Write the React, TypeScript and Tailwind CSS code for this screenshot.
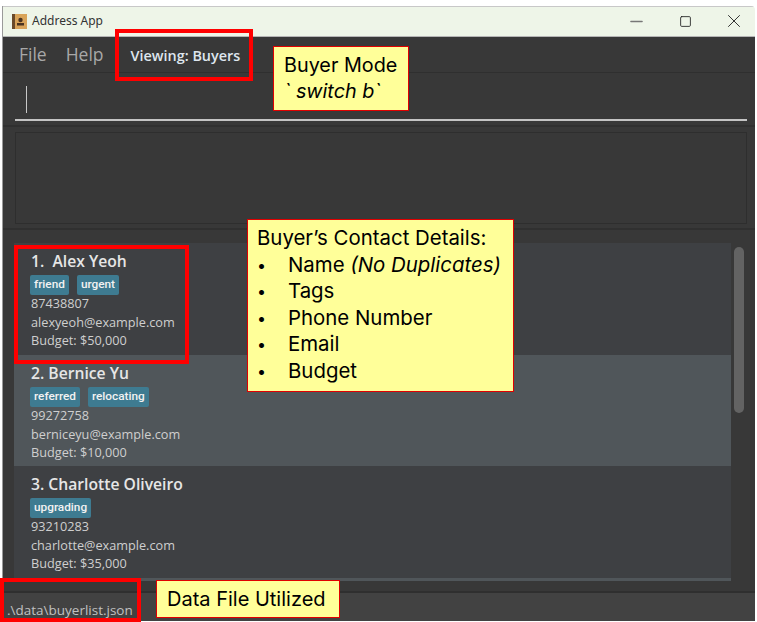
import { Minus, Square, X } from 'lucide-react';

const appFont = "font-['Open_Sans','Noto_Sans',sans-serif]";

const buyers = [
  { name: '1.  Alex Yeoh', tags: ['friend', 'urgent'], phone: '87438807', email: 'alexyeoh@example.com', budget: 'Budget: $50,000', alt: false },
  { name: '2. Bernice Yu', tags: ['referred', 'relocating'], phone: '99272758', email: 'berniceyu@example.com', budget: 'Budget: $10,000', alt: true },
  { name: '3. Charlotte Oliveiro', tags: ['upgrading'], phone: '93210283', email: 'charlotte@example.com', budget: 'Budget: $35,000', alt: false },
];

function BuyerCard({ buyer }: { buyer: (typeof buyers)[number] }) {
  return (
    <div className={`h-[111.5px] pl-[17px] pt-[7px] ${buyer.alt ? 'bg-[#50565a]' : 'bg-[#3e4043]'}`}>
      <div className="text-[15.7px] leading-[22px] font-semibold whitespace-pre text-[#e6e6e6]">{buyer.name}</div>
      <div className="flex gap-[8px] ml-[-1px] mt-[3px] mb-[-1px]">
        {buyer.tags.map(tag => (
          <span key={tag} className="h-[20px] px-[4px] rounded-[2px] bg-[#3e7b91] text-[#f2f2f2] font-['Roboto',sans-serif] text-[11.8px] leading-[19px] font-medium">{tag}</span>
        ))}
      </div>
      <div className="text-[12.7px] leading-[18px] mb-[1px] text-[#cfcfcf]">{buyer.phone}</div>
      <div className="text-[12.7px] leading-[18px] text-[#cfcfcf]">{buyer.email}</div>
      <div className="text-[12.7px] leading-[18px] text-[#cfcfcf]">{buyer.budget}</div>
    </div>
  );
}

const noteFont = "font-['Inter','Noto_Sans',sans-serif] text-black";

export default function App() {
  return (
    <div className="relative w-[757px] h-[622px] bg-white overflow-hidden pt-[6px] pl-[2px] pr-[2px]">
      <div className={`flex flex-col h-[615px] border-l border-[#9a9a9a] rounded-tr-[4px] overflow-hidden ${appFont}`}>
        {/* title bar */}
        <div className="h-[31px] shrink-0 flex items-center pb-[1px] bg-[#eef5e8] border-t border-[#c8c8c8] border-b border-b-[#b5b5b5]">
          <svg className="ml-[9px] mr-[5px]" width="15" height="15" viewBox="0 0 15 15">
            <rect x="0" y="0" width="15" height="15" fill="#d9a45a" />
            <rect x="0" y="0" width="3" height="15" fill="#6a4a2a" />
            <circle cx="8.5" cy="6" r="2.2" fill="#4a3320" />
            <rect x="5" y="9" width="7" height="2.5" fill="#4a3320" />
          </svg>
          <span className="font-['Noto_Sans',sans-serif] text-[12px] text-[#333]">Address App</span>
          <div className="ml-auto flex items-center">
            <div className="w-[42px] flex justify-center"><Minus size={19} strokeWidth={2} color="#777" /></div>
            <div className="w-[56px] flex justify-center"><Square size={13} strokeWidth={1.6} color="#222" /></div>
            <div className="w-[42px] flex justify-center"><X size={22} strokeWidth={1} color="#222" /></div>
          </div>
        </div>

        {/* menu bar */}
        <div className="h-[36px] shrink-0 flex items-center bg-[#383838] border-b border-[#2f2f2f] pl-[16px]">
          <span className="text-[17.5px] text-[#a8a8a8]">File</span>
          <span className="text-[17.5px] text-[#a8a8a8] ml-[19px]">Help</span>
          <span className="text-[14.4px] font-semibold text-[#dfe6ee] ml-[27px] relative top-[1px]">Viewing: Buyers</span>
        </div>

        {/* command box */}
        <div className="h-[54px] shrink-0 bg-[#383838] border-b-2 border-[#303030] pl-[12px] pr-[8px] pt-[13px]">
          <div className="h-[35px] border-b-2 border-[#c4c4c4] pl-[11px]">
            <div className="w-[1px] h-[27px] bg-[#c8c8c8]" />
          </div>
        </div>

        {/* result display */}
        <div className="h-[103px] shrink-0 bg-[#383838] border-b-2 border-[#303030] pl-[12px] pr-[8px] pt-[5px]">
          <div className="h-[92px] border border-[#2e2e2e] bg-[#383838]" />
        </div>

        {/* buyer list */}
        <div className="flex-1 min-h-0 flex bg-[#383838] pl-[11px] pt-[13px] pb-[10px] border-b-2 border-[#2f2f2f]">
          <div className="w-[717px] overflow-hidden">
            {buyers.map(buyer => (
              <BuyerCard key={buyer.name} buyer={buyer} />
            ))}
            <div className="h-[5px] bg-[#50565a]" />
          </div>
          <div className="ml-[3px] w-[10px] h-[166px] mt-[4px] rounded-[5px] bg-[#636363]" />
        </div>

        {/* status bar */}
        <div className="h-[28px] shrink-0 bg-[#424242] text-[13.5px] leading-[22px] text-[#c0c0c0] pl-[4px] pt-[6px]">.\data\buyerlist.json</div>
      </div>

      {/* annotations over the screenshot */}
      <div className="absolute left-[115px] top-[29px] w-[138px] h-[52px] border-[4px] border-[#ff0000]" />
      <div className="absolute left-[14px] top-[245px] w-[175px] h-[119px] border-[4px] border-[#ff0000]" />
      <div className="absolute left-[0px] top-[578px] w-[141px] h-[44px] border-[4px] border-[#ff0000]" />

      <div className={`absolute left-[273px] top-[46px] w-[136px] h-[65px] bg-[#ffff99] border border-[#e00000] pl-[10px] pt-[5px] text-[19.8px] leading-[26px] ${noteFont}`}>
        <div>Buyer Mode</div>
        <div className="italic">` switch b`</div>
      </div>

      <div className={`absolute left-[247px] top-[219px] w-[267px] h-[173px] bg-[#ffff99] border border-[#e00000] pl-[9px] pt-[5px] text-[20.4px] leading-[26.6px] ${noteFont}`}>
        <div>Buyer’s Contact Details:</div>
        {['Name', 'Tags', 'Phone Number', 'Email', 'Budget'].map(item => (
          <div key={item} className="flex">
            <span className="w-[31px] text-[16px]">•</span>
            <span>
              {item}
              {item === 'Name' && <span className="italic"> (No Duplicates)</span>}
            </span>
          </div>
        ))}
      </div>

      <div className={`absolute left-[156px] top-[580px] w-[184px] h-[38px] bg-[#ffff99] border border-[#e00000] pl-[10px] text-[20px] leading-[36px] ${noteFont}`}>
        Data File Utilized
      </div>
    </div>
  );
}
